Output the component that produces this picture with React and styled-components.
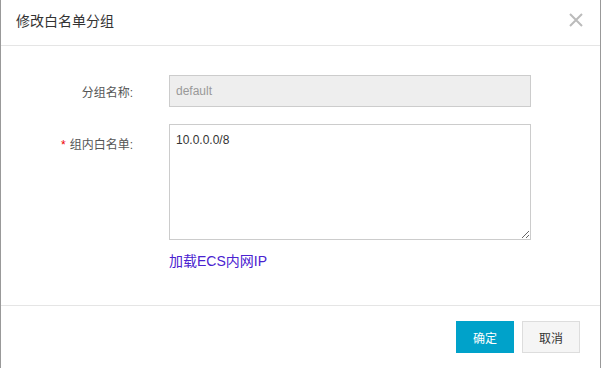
import React from 'react';
import styled, { createGlobalStyle } from 'styled-components';

const Global = createGlobalStyle`
  html, body { margin: 0; padding: 0; background: #fff; }
  body { font-family: "Liberation Sans", "Noto Sans CJK SC", sans-serif; font-size: 12px; color: #333; }
`;

const Dialog = styled.div`
  width: 601px;
  height: 368px;
  box-sizing: border-box;
  border-left: 1px solid #999;
  border-right: 1px solid #999;
  display: flex;
  flex-direction: column;
  background: #fff;
`;

const Header = styled.div`
  height: 46px;
  box-sizing: border-box;
  border-bottom: 1px solid #e5e5e5;
  display: flex;
  align-items: center;
  justify-content: space-between;
  padding: 0 17px 6px 15px;
`;

const Title = styled.div`
  font-size: 14px;
  color: #333;
`;

const Close = styled.button`
  border: none;
  background: none;
  padding: 0;
  width: 14px;
  height: 14px;
  display: flex;
  cursor: pointer;
`;

const Body = styled.div`
  flex: 1;
  padding: 29px 0 0 0;
  display: flex;
  flex-direction: column;
  gap: 17px;
  border-bottom: 1px solid #e5e5e5;
`;

const Row = styled.div`
  display: flex;
  align-items: flex-start;
`;

const Label = styled.label`
  width: 132px;
  text-align: right;
  padding-top: ${p => p.$top}px;
  padding-right: 36px;
  color: #555;
  font-size: 12px;
  flex-shrink: 0;
`;

const Star = styled.span`
  color: #e00;
  margin-right: 4px;
`;

const Field = styled.div`
  display: flex;
  flex-direction: column;
  gap: 10px;
`;

const Input = styled.input`
  width: 362px;
  height: 32px;
  box-sizing: border-box;
  border: 1px solid #ccc;
  background: #eee;
  color: #999;
  padding: 0 6px;
  font: 12px "Liberation Sans", sans-serif;
  outline: none;
`;

const Area = styled.textarea`
  width: 362px;
  height: 116px;
  box-sizing: border-box;
  border: 1px solid #ccc;
  padding: 8px 6px;
  font: 12px "Liberation Sans", sans-serif;
  color: #333;
  resize: both;
  outline: none;
`;

const Link = styled.a`
  color: #4a22d0;
  font-size: 14px;
  text-decoration: none;
  cursor: pointer;
`;

const Footer = styled.div`
  height: 62px;
  display: flex;
  justify-content: flex-end;
  align-items: center;
  gap: 8px;
  padding: 0 20px 0 0;
`;

const Button = styled.button`
  width: 58px;
  height: 32px;
  font: 12px "Liberation Sans", "Noto Sans CJK SC", sans-serif;
  cursor: pointer;
  border: 1px solid ${p => (p.$primary ? '#00a2ca' : '#ddd')};
  background: ${p => (p.$primary ? '#00a2ca' : '#f5f5f5')};
  color: ${p => (p.$primary ? '#fff' : '#333')};
`;

export default function App() {
  return (
    <>
      <Global />
      <Dialog>
        <Header>
          <Title>修改白名单分组</Title>
          <Close aria-label="close">
            <svg width="14" height="14" viewBox="0 0 14 14">
              <path d="M1 1L13 13M13 1L1 13" stroke="#bbb" strokeWidth="2" />
            </svg>
          </Close>
        </Header>
        <Body>
          <Row>
            <Label $top={8}>分组名称:</Label>
            <Input value="default" disabled readOnly />
          </Row>
          <Row>
            <Label $top={11}><Star>*</Star>组内白名单:</Label>
            <Field>
              <Area defaultValue="10.0.0.0/8" />
              <Link>加载ECS内网IP</Link>
            </Field>
          </Row>
        </Body>
        <Footer>
          <Button $primary>确定</Button>
          <Button>取消</Button>
        </Footer>
      </Dialog>
    </>
  );
}
